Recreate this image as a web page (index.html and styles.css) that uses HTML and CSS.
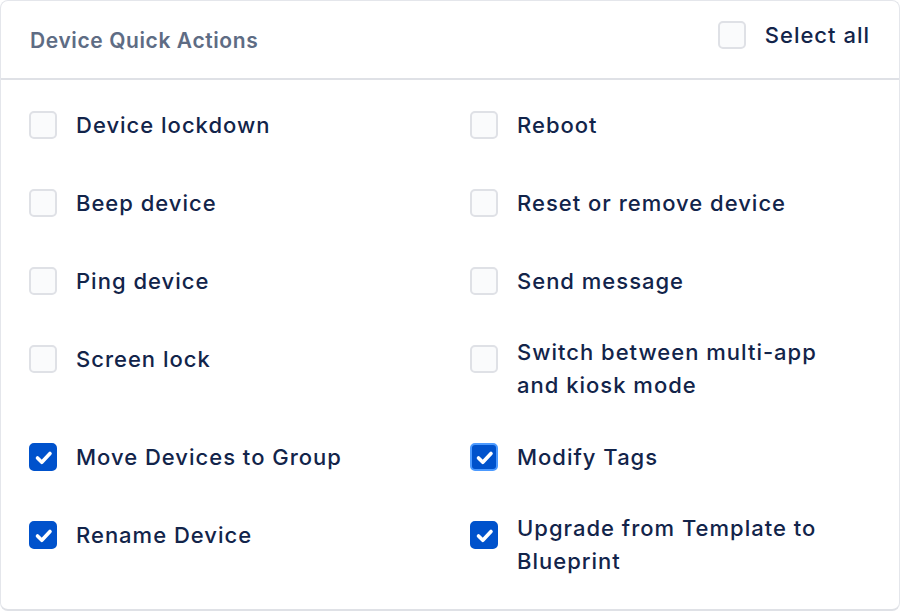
FILE: index.html
```html
<!DOCTYPE html>
<html>
<head>
<meta charset="utf-8">
<link rel="stylesheet" href="styles.css">
</head>
<body>
<div class="card">
  <div class="header">
    <div class="title">Device Quick Actions</div>
    <label class="select-all">
      <span class="box"></span>
      <span class="select-text">Select all</span>
    </label>
  </div>
  <div class="list">
    <div class="item"><span class="box"></span><span class="label">Device lockdown</span></div>
    <div class="item"><span class="box"></span><span class="label">Reboot</span></div>
    <div class="item"><span class="box"></span><span class="label">Beep device</span></div>
    <div class="item"><span class="box"></span><span class="label">Reset or remove device</span></div>
    <div class="item"><span class="box"></span><span class="label">Ping device</span></div>
    <div class="item"><span class="box"></span><span class="label">Send message</span></div>
    <div class="item"><span class="box"></span><span class="label">Screen lock</span></div>
    <div class="item"><span class="box"></span><span class="label">Switch between multi-app and kiosk mode</span></div>
    <div class="item"><span class="box checked"><svg viewBox="0 0 27 27"><path d="M7.5 14 L11.8 18.3 L20 9.5" /></svg></span><span class="label">Move Devices to Group</span></div>
    <div class="item"><span class="box checked focus"><svg viewBox="0 0 27 27"><path d="M7.5 14 L11.8 18.3 L20 9.5" /></svg></span><span class="label">Modify Tags</span></div>
    <div class="item"><span class="box checked"><svg viewBox="0 0 27 27"><path d="M7.5 14 L11.8 18.3 L20 9.5" /></svg></span><span class="label">Rename Device</span></div>
    <div class="item"><span class="box checked"><svg viewBox="0 0 27 27"><path d="M7.5 14 L11.8 18.3 L20 9.5" /></svg></span><span class="label">Upgrade from Template to Blueprint</span></div>
  </div>
</div>
</body>
</html>
```
FILE: styles.css
```css
* { box-sizing: border-box; }
html, body { margin: 0; padding: 0; background: #ffffff; }
body {
  font-family: Inter, "Noto Sans", "Liberation Sans", sans-serif;
  width: 900px;
  height: 612px;
  overflow: hidden;
}
.card {
  width: 900px;
  height: 611px;
  background: #ffffff;
  border: 1px solid #e4e6eb;
  border-bottom: 2px solid #dfe1e6;
  border-radius: 8px;
}
.header {
  height: 79px;
  border-bottom: 2px solid #dfe1e6;
  display: flex;
  align-items: center;
  justify-content: space-between;
  padding: 0 29px 0 29px;
}
.title {
  font-size: 21px;
  font-weight: 600;
  letter-spacing: 0.6px;
  color: #5e6c84;
  line-height: 33px;
  margin-top: 2px;
}
.select-all {
  display: flex;
  align-items: center;
  gap: 19px;
  margin-top: -9px;
}
.select-text {
  font-size: 22px;
  font-weight: 500;
  letter-spacing: 1px;
  color: #12244a;
  line-height: 33px;
}
.box {
  flex: none;
  width: 28px;
  height: 28px;
  border: 2px solid #dfe1e6;
  background: #fafbfc;
  border-radius: 5px;
  display: flex;
  align-items: center;
  justify-content: center;
}
.box.checked {
  background: #0052cc;
  border-color: #0052cc;
}
.box.checked.focus {
  border-color: #4c9aff;
}
.box svg {
  width: 27px;
  height: 27px;
  flex: none;
}
.box path {
  fill: none;
  stroke: #ffffff;
  stroke-width: 3.6;
  stroke-linecap: round;
  stroke-linejoin: round;
}
.list {
  display: grid;
  grid-template-columns: 441px 385px;
  padding: 6px 0 0 28px;
}
.item {
  display: flex;
  align-items: flex-start;
  gap: 19px;
  padding: 16px 0;
}
.item .box {
  margin-top: 9px;
}
.label {
  min-height: 46px;
  display: flex;
  align-items: center;
  font-size: 22px;
  font-weight: 500;
  letter-spacing: 1px;
  line-height: 33px;
  color: #12244a;
}
```
